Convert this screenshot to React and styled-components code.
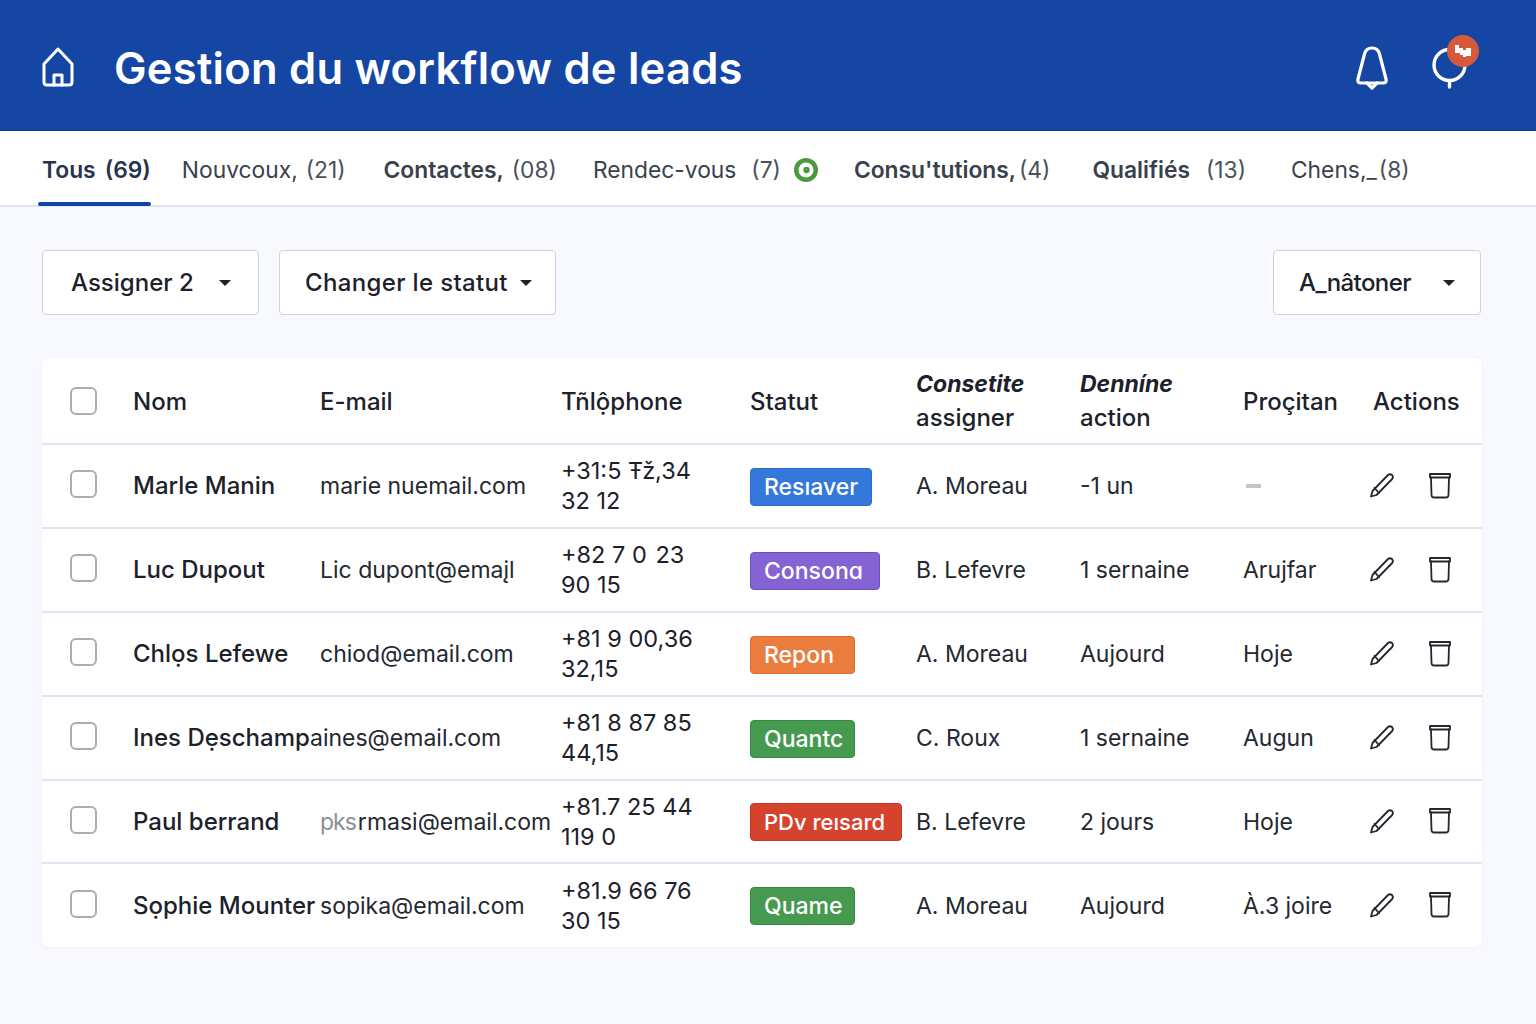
import React from 'react'
import styled, { createGlobalStyle } from 'styled-components'

const GlobalStyle = createGlobalStyle`
  html, body { margin: 0; padding: 0; background: #f8f9fe; }
  body { font-family: "Inter", "Liberation Sans", sans-serif; color: #1c212b; }
`

const Page = styled.div`
  width: 1536px;
  height: 1024px;
  overflow: hidden;
  background: #f8f9fe;
`

const TopBar = styled.header`
  height: 131px;
  box-sizing: border-box;
  display: flex;
  align-items: center;
  padding: 0 66px 0 40px;
  background: #1546a4;
  border-bottom: 1px solid #0b3a9b;
  color: #fff;
`

const HomeWrap = styled.div`
  display: flex;
  margin-top: 4px;
`

const Title = styled.h1`
  flex: 1;
  margin: 5px 0 0 38px;
  font-size: 43.5px;
  font-weight: 600;
  letter-spacing: 0.25px;
`

const IconGroup = styled.div`
  display: flex;
  align-items: center;
  gap: 38px;
  margin-top: 6px;
`

const IconWrap = styled.div`
  position: relative;
  width: 40px;
  height: 52px;
  display: flex;
  align-items: center;
  justify-content: center;
`

const Badge = styled.span`
  position: absolute;
  top: -7px;
  left: 17px;
  width: 32px;
  height: 32px;
  border-radius: 50%;
  background: #d5593a;
  display: flex;
  align-items: center;
  justify-content: center;
`

const Tabs = styled.nav`
  height: 76px;
  box-sizing: border-box;
  display: flex;
  padding-left: 42px;
  background: #fff;
  border-bottom: 2px solid #dfe2ef;
`

const Tab = styled.div`
  position: relative;
  height: 76px;
  box-sizing: border-box;
  padding-top: 23px;
  margin-right: ${p => p.$gap}px;
  display: flex;
  gap: ${p => p.$inner}px;
  font-size: 22.8px;
  line-height: 32px;
  white-space: nowrap;
  color: #39414e;
  &::after {
    content: ${p => (p.$active ? '""' : 'none')};
    position: absolute;
    left: -4px;
    right: 0;
    bottom: 1px;
    height: 4px;
    border-radius: 2px;
    background: #0f45a5;
  }
`

const TabLabel = styled.span`
  font-weight: ${p => (p.$strong ? 600 : 400)};
  color: ${p => (p.$active ? '#26354d' : '#39414e')};
`

const TabCount = styled.span`
  font-weight: ${p => (p.$active ? 600 : 400)};
  color: ${p => (p.$active ? '#26354d' : '#4a515d')};
`

const SyncWrap = styled.span`
  display: flex;
  margin: 4px 0 0 -2px;
`

const Toolbar = styled.div`
  display: flex;
  gap: 20px;
  padding: 43px 55px 43px 42px;
`

const Dropdown = styled.button`
  width: ${p => p.$w}px;
  height: 65px;
  box-sizing: border-box;
  padding: 0 ${p => p.$right}px 0 ${p => p.$left}px;
  display: flex;
  align-items: center;
  justify-content: space-between;
  margin-left: ${p => (p.$push ? 'auto' : '0')};
  background: #fff;
  border: 1px solid #cdd2de;
  border-radius: 4px;
  font-family: inherit;
  font-size: 24px;
  font-weight: 500;
  letter-spacing: ${p => p.$track || 0}px;
  color: #1c212b;
`

const Caret = styled.span`
  width: 0;
  height: 0;
  border-left: 6px solid transparent;
  border-right: 6px solid transparent;
  border-top: 6px solid #1c212b;
`

const Card = styled.section`
  width: 1440px;
  margin-left: 42px;
  background: #fff;
  border-radius: 8px;
  box-shadow: 0 1px 4px rgba(40, 60, 120, 0.04);
`

const Row = styled.div`
  display: grid;
  grid-template-columns: 63px 187px 241px 189px 166px 164px 163px 127px 1fr;
  align-items: center;
  box-sizing: border-box;
  height: ${p => p.$h}px;
  padding-left: 28px;
  font-size: 23px;
  line-height: 30px;
  border-top: ${p => (p.$first ? 'none' : '2px solid #e1e5f3')};
`

const Check = styled.span`
  display: block;
  width: 27px;
  height: 28px;
  box-sizing: border-box;
  margin-bottom: ${p => (p.$head ? 0 : 4)}px;
  background: #fff;
  border: 2px solid #a9aeb7;
  border-radius: 6px;
`

const HeadCell = styled.div`
  font-size: 24px;
  font-weight: 500;
  line-height: 33px;
  padding-top: 1px;
  white-space: nowrap;
  margin-left: ${p => p.$shift || 0}px;
`

const HeadEm = styled.em`
  display: block;
  font-weight: 700;
  font-size: 23px;
`

const Name = styled.div`
  font-size: 24px;
  font-weight: 500;
  white-space: nowrap;
`

const Cell = styled.div`
  white-space: nowrap;
  color: #232831;
  margin-left: ${p => p.$shift || 0}px;
`

const Ghost = styled.span`
  color: #8a8f98;
  letter-spacing: -1px;
  margin-right: 2px;
`

const Phone = styled.div`
  white-space: pre;
  font-size: 23.5px;
  color: #1c212b;
`

const Status = styled.span`
  display: inline-block;
  box-sizing: border-box;
  width: ${p => p.$w}px;
  height: 38px;
  margin-top: 1px;
  padding: 0 13px;
  font-size: ${p => p.$size || 23}px;
  line-height: 37px;
  border-radius: 4px;
  background: ${p => p.$bg};
  border: 1px solid ${p => p.$edge};
  color: #fff;
  font-weight: 500;
  white-space: nowrap;
`

const Dash = styled.span`
  display: block;
  width: 15px;
  height: 4px;
  margin-left: 3px;
  background: #c3c6cc;
`

const Actions = styled.div`
  display: flex;
  align-items: center;
  gap: 32px;
  margin: 0 0 2px -2px;
`

const HomeIcon = () => (
  <svg width="36" height="42" viewBox="0 0 36 42" fill="none" stroke="#fff" strokeWidth="3" strokeLinejoin="round" strokeLinecap="round">
    <path d="M18 3 L32 18 V36 Q32 39 29 39 H7 Q4 39 4 36 V18 Z" />
    <path d="M14 39 V29 H22 V39" />
  </svg>
)

const BellIcon = () => (
  <svg width="36" height="46" viewBox="0 0 36 46" fill="none" stroke="#fff" strokeWidth="3.2" strokeLinejoin="round" strokeLinecap="round">
    <path d="M18 3 Q24 3 25.5 9 L32 34 Q33 38 29 38 H7 Q3 38 4 34 L10.5 9 Q12 3 18 3 Z" />
    <path d="M13 38 L18 43 L23 38" />
  </svg>
)

const ChatIcon = () => (
  <svg width="40" height="52" viewBox="0 0 40 52" fill="none" stroke="#fff" strokeWidth="3.4" strokeLinecap="round">
    <circle cx="19.5" cy="23" r="15.5" />
    <path d="M19.5 39 V45" />
  </svg>
)

const BadgeMark = () => (
  <svg width="16" height="12" viewBox="0 0 16 12" fill="#fff">
    <path d="M0 0 H4 V3 H8 V5 H11 V3 H16 V11 H11 V12 H8 V10 H5 V8 H0 Z" />
  </svg>
)

const SyncDot = () => (
  <svg width="24" height="24" viewBox="0 0 24 24" fill="none">
    <circle cx="12" cy="12" r="12" fill="#4b9a3d" />
    <circle cx="12" cy="12" r="7.5" fill="#fff" />
    <circle cx="12.5" cy="12" r="3.2" fill="#4b9a3d" />
  </svg>
)

const PenIcon = () => (
  <svg width="28" height="28" viewBox="0 0 28 28" fill="none" stroke="#23272f" strokeWidth="1.8" strokeLinejoin="round" strokeLinecap="round">
    <path d="M3 25.5 L4.5 20 L20 4 Q22 2.5 24 4 Q25.8 6 24.2 8 L8.5 24 Z" />
    <path d="M6.5 17 L11 22" />
  </svg>
)

const BinIcon = () => (
  <svg width="24" height="27" viewBox="0 0 24 27" fill="none" stroke="#23272f" strokeWidth="1.8" strokeLinejoin="round" strokeLinecap="round">
    <path d="M2 2 H22 V5.5 H2 Z" />
    <path d="M3 5.5 L3.5 23 Q3.6 25.5 6 25.5 H18 Q20.4 25.5 20.5 23 L21 5.5" />
  </svg>
)

const tabs = [
  { label: 'Tous', count: '(69)', gap: 31, inner: 9, strong: true, active: true },
  { label: 'Nouvcoux,', count: '(21)', gap: 38, inner: 8 },
  { label: 'Contactes,', count: '(08)', gap: 36, inner: 8, strong: true },
  { label: 'Rendec-vous', count: '(7)', gap: 36, inner: 15, sync: true },
  { label: "Consu'tutions,", count: '(4)', gap: 42, inner: 3, strong: true },
  { label: 'Qualifiés', count: '(13)', gap: 45, inner: 16, strong: true },
  { label: 'Chens,_', count: '(8)', gap: 0, inner: 2 },
]

const leads = [
  { name: 'Marle Manin', email: 'marie nuemail.com', phone: '+31:5 Ŧž,34\n32 12', status: 'Resıaver', w: 122, bg: '#3578dc', edge: '#2a6cd6', owner: 'A. Moreau', last: '-1 un', next: null, h: 84 },
  { name: 'Luc Dupout', email: 'Lic dupont@emaįl', phone: '+82 7 0 \u200a23\n90 15', status: 'Consonɑ', w: 130, bg: '#8464d2', edge: '#6f4fc8', owner: 'B. Lefevre', last: '1 sernaine', next: 'Arujfar', h: 84 },
  { name: 'Chlọs Lefewe', email: 'chiod@email.com', phone: '+81 9 00,36\n32,15', status: 'Repon', w: 105, bg: '#ea7d3e', edge: '#dc6a28', owner: 'A. Moreau', last: 'Aujourd', next: 'Hoje', h: 84 },
  { name: 'Ines Dẹschamp', email: 'aines@email.com', shift: -10, phone: '+81 8 87 85\n44,15', status: 'Quantc', w: 105, bg: '#469a50', edge: '#378a42', owner: 'C. Roux', last: '1 sernaine', next: 'Augun', h: 84 },
  { name: 'Paul berrand', ghost: 'pks', email: 'rmasi@email.com', phone: '+81.7 25 44\n119 0', status: 'PDv reısard', w: 152, size: 22, bg: '#d5432f', edge: '#c83a28', owner: 'B. Lefevre', last: '2 jours', next: 'Hoje', h: 83 },
  { name: 'Sọphie Mounter', email: 'sopika@email.com', phone: '+81.9 66 76\n30 15', status: 'Quame', w: 105, bg: '#469a50', edge: '#378a42', owner: 'A. Moreau', last: 'Aujourd', next: 'À.3 joire', h: 85 },
]

const App = () => (
  <Page>
    <GlobalStyle />
    <TopBar>
      <HomeWrap><HomeIcon /></HomeWrap>
      <Title>Gestion du workflow de leads</Title>
      <IconGroup>
        <IconWrap><BellIcon /></IconWrap>
        <IconWrap>
          <ChatIcon />
          <Badge><BadgeMark /></Badge>
        </IconWrap>
      </IconGroup>
    </TopBar>

    <Tabs>
      {tabs.map(tab => (
        <Tab key={tab.label} $gap={tab.gap} $inner={tab.inner} $active={tab.active}>
          <TabLabel $strong={tab.strong} $active={tab.active}>{tab.label}</TabLabel>
          <TabCount $active={tab.active}>{tab.count}</TabCount>
          {tab.sync && <SyncWrap><SyncDot /></SyncWrap>}
        </Tab>
      ))}
    </Tabs>

    <Toolbar>
      <Dropdown $w={217} $left={28} $right={27}>Assigner 2 <Caret /></Dropdown>
      <Dropdown $w={277} $left={25} $right={23} $track={0.35}>Changer le statut <Caret /></Dropdown>
      <Dropdown $w={208} $left={25} $right={25} $track={-0.6} $push>A_nâtoner <Caret /></Dropdown>
    </Toolbar>

    <Card>
      <Row $h={85} $first>
        <Check $head />
        <HeadCell>Nom</HeadCell>
        <HeadCell>E-mail</HeadCell>
        <HeadCell>Tñlộphone</HeadCell>
        <HeadCell>Statut</HeadCell>
        <HeadCell><HeadEm>Consetite</HeadEm>assigner</HeadCell>
        <HeadCell><HeadEm>Denníne</HeadEm>action</HeadCell>
        <HeadCell>Proçitan</HeadCell>
        <HeadCell $shift={3}>Actions</HeadCell>
      </Row>
      {leads.map(lead => (
        <Row key={lead.name} $h={lead.h}>
          <Check />
          <Name>{lead.name}</Name>
          <Cell $shift={lead.shift}>{lead.ghost && <Ghost>{lead.ghost}</Ghost>}{lead.email}</Cell>
          <Phone>{lead.phone}</Phone>
          <div><Status $w={lead.w} $size={lead.size} $bg={lead.bg} $edge={lead.edge}>{lead.status}</Status></div>
          <Cell>{lead.owner}</Cell>
          <Cell>{lead.last}</Cell>
          {lead.next ? <Cell>{lead.next}</Cell> : <Dash />}
          <Actions><PenIcon /><BinIcon /></Actions>
        </Row>
      ))}
    </Card>
  </Page>
)

export default App
